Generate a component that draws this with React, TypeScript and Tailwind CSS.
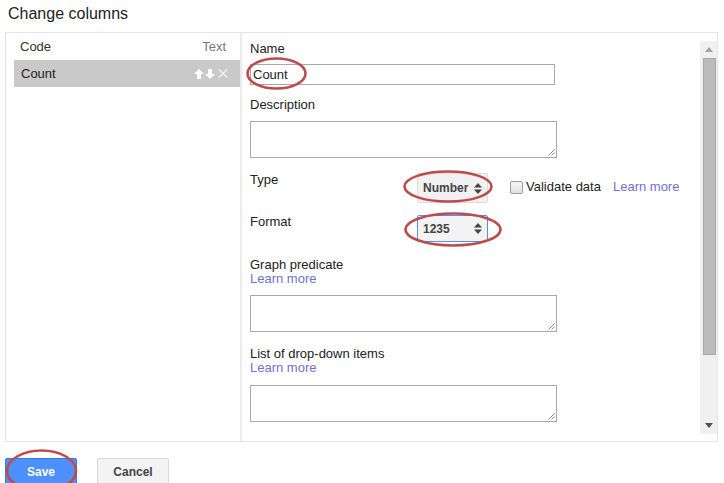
import React from "react";

function UpDown({ color = "#444" }: { color?: string }) {
  return (
    <svg width="8" height="11" viewBox="0 0 8 11">
      <polygon points="4,0 8,4.5 0,4.5" fill={color} />
      <polygon points="0,6.5 8,6.5 4,11" fill={color} />
    </svg>
  );
}

function RowIcons() {
  return (
    <div className="flex items-center gap-[1px]">
      <svg width="10" height="10" viewBox="0 0 10 10">
        <polygon points="5,0 10,5 7,5 7,10 3,10 3,5 0,5" fill="#fff" />
      </svg>
      <svg width="10" height="10" viewBox="0 0 10 10">
        <polygon points="3,0 7,0 7,5 10,5 5,10 0,5 3,5" fill="#fff" />
      </svg>
      <svg width="12" height="10" viewBox="0 0 12 10" className="ml-[1px]">
        <path d="M2 0.5 L10 8.5 M10 0.5 L2 8.5" stroke="#f4f4f4" strokeWidth="1.1" />
      </svg>
    </div>
  );
}

function Link({ children }: { children: React.ReactNode }) {
  return <span className="text-[#7070d2]">{children}</span>;
}

function TextArea({ top }: { top: string }) {
  return (
    <div className={`${top} relative w-[307px] h-[37px] border border-[#a9a9a9] bg-white`}>
      <svg width="7" height="7" viewBox="0 0 7 7" className="absolute right-[1px] bottom-[1px]">
        <path d="M6.5 0.5 L0.5 6.5 M6.5 3.5 L3.5 6.5" stroke="#8a8a8a" strokeWidth="1" />
      </svg>
    </div>
  );
}

export default function App() {
  return (
    <div
      className="relative w-[724px] h-[483px] overflow-hidden bg-white text-[13px] leading-[16px] text-[#222]"
      style={{ fontFamily: '"Liberation Sans", Arial, sans-serif' }}
    >
      <div className="pl-[8px] pt-[4px] h-[32px] text-[16px] leading-[20px] text-[#222]">
        Change columns
      </div>

      <div className="ml-[5px] w-[713px] h-[410px] border border-[#e5e5e5] flex">
        {/* left panel */}
        <div className="w-[234px] pl-[8px]">
          <div className="h-[27px] flex items-center justify-between pl-[6px] pr-[14px]">
            <span className="text-[#333]">Code</span>
            <span className="text-[#777]">Text</span>
          </div>
          <div className="h-[27px] bg-[#c9c9c9] flex items-center justify-between pl-[7px] pr-[11px]">
            <span className="text-[#222]">Count</span>
            <RowIcons />
          </div>
        </div>
        <div className="w-[2px] bg-[#ebebeb]" />

        {/* right panel */}
        <div className="flex-1 flex">
          <div className="flex-1 pl-[8px] pt-[8px]">
            <div>Name</div>
            <div className="mt-[7px] w-[305px] h-[21px] border border-[#a9a9a9] flex items-center pl-[2px]">
              Count
            </div>

            <div className="mt-[12px]">Description</div>
            <TextArea top="mt-[8px]" />

            <div className="mt-[14px] flex items-start">
              <div className="w-[167px]">Type</div>
              <div className="mt-[1px] w-[71px] h-[30px] bg-[#f1f1f1] border border-[#dcdcdc] rounded-[2px] flex items-center justify-between pl-[5px] pr-[5px] text-[12px] font-bold text-[#444]">
                <span>Number</span>
                <UpDown />
              </div>
              <div className="ml-[22px] mt-[7px] flex items-center">
                <div className="w-[13px] h-[13px] border border-[#9a9a9a] rounded-[2px] bg-gradient-to-b from-[#f6f6f6] to-[#e2e2e2]" />
                <span className="ml-[3px]">Validate data</span>
                <span className="ml-[12px]">
                  <Link>Learn more</Link>
                </span>
              </div>
            </div>

            <div className="mt-[11px] flex items-start">
              <div className="w-[167px]">Format</div>
              <div className="mt-[1px] w-[71px] h-[27px] bg-[#f3f3f3] border border-[#4d90fe] rounded-[2px] flex items-center justify-between pl-[5px] pr-[5px] text-[12px] font-bold text-[#444]">
                <span>1235</span>
                <UpDown />
              </div>
            </div>

            <div className="mt-[16px] leading-[14px]">Graph predicate</div>
            <div className="leading-[14px]">
              <Link>Learn more</Link>
            </div>
            <TextArea top="mt-[9px]" />

            <div className="mt-[15px] leading-[14px]">List of drop-down items</div>
            <div className="leading-[14px]">
              <Link>Learn more</Link>
            </div>
            <TextArea top="mt-[10px]" />
          </div>

          {/* scrollbar */}
          <div className="w-[17px] mt-[8px] mb-[7px] bg-[#f0f0f0] flex flex-col items-center">
            <div className="h-[17px] flex items-center justify-center">
              <svg width="8" height="5" viewBox="0 0 8 5">
                <polygon points="4,0 8,5 0,5" fill="#a3a3a3" />
              </svg>
            </div>
            <div className="ml-[1px] w-[13px] h-[297px] bg-[#bcbcbc] border border-[#a8a8a8]" />
            <div className="flex-1" />
            <div className="h-[17px] flex items-center justify-center">
              <svg width="8" height="5" viewBox="0 0 8 5">
                <polygon points="0,0 8,0 4,5" fill="#505050" />
              </svg>
            </div>
          </div>
        </div>
      </div>

      {/* buttons */}
      <div className="mt-[16px] ml-[5px] flex gap-[20px]">
        <div className="w-[72px] h-[28px] bg-[#4d90fe] border border-[#3079ed] rounded-[2px] flex items-center justify-center text-[12px] font-bold text-white">
          Save
        </div>
        <div className="w-[72px] h-[28px] bg-[#f3f3f3] border border-[#d9d9d9] rounded-[2px] flex items-center justify-center text-[12px] font-bold text-[#444]">
          Cancel
        </div>
      </div>

      {/* annotation ellipses */}
      <svg
        className="absolute left-0 top-0 pointer-events-none"
        width="724"
        height="483"
        viewBox="0 0 724 483"
      >
        <g fill="none" stroke="#bd4b4b" strokeWidth="2.6">
          <ellipse cx="276.5" cy="73.5" rx="29" ry="15" />
          <ellipse cx="448" cy="186.5" rx="43.5" ry="15" />
          <ellipse cx="453" cy="229.5" rx="47.5" ry="16" />
          <ellipse cx="41.5" cy="471" rx="34.5" ry="20.5" />
        </g>
      </svg>
    </div>
  );
}
